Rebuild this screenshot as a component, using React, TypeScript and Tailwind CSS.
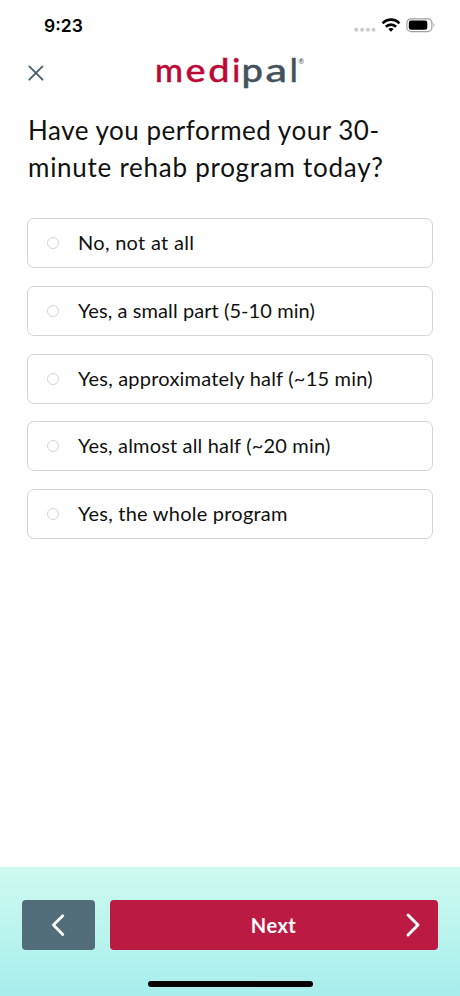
const options = [
  { label: "No, not at all", tracking: "tracking-[0.3px]" },
  { label: "Yes, a small part (5-10 min)", tracking: "tracking-[0.08px]" },
  { label: "Yes, approximately half (~15 min)", tracking: "tracking-[0.21px]" },
  { label: "Yes, almost all half (~20 min)", tracking: "tracking-[0.17px]" },
  { label: "Yes, the whole program", tracking: "tracking-[0.23px]" },
];

const wordmark = [
  { char: "m", x: 4, length: 28, fill: "#bd0837" },
  { char: "e", x: 34.6, length: 20, fill: "#bd0837" },
  { char: "d", x: 57.2, length: 21.3, fill: "#bd0837" },
  { char: "i", x: 81.2, length: 8, fill: "#bd0837" },
  { char: "p", x: 90.5, length: 21.5, fill: "#43525c" },
  { char: "a", x: 114.6, length: 21.5, fill: "#43525c" },
  { char: "l", x: 138.8, length: 8, fill: "#43525c" },
];

function StatusBar() {
  return (
    <div className="flex h-[50px] shrink-0 items-center justify-between pl-[44px] pr-[24px]">
      <span className="pt-[2px] font-['Inter',sans-serif] text-[17.5px] font-semibold leading-none text-black">9:23</span>
      <svg width="82" height="18" viewBox="0 0 82 18" className="block">
        <g fill="#cbcbcb">
          <circle cx="2.3" cy="13.7" r="2" />
          <circle cx="8.1" cy="13.7" r="2" />
          <circle cx="13.9" cy="13.7" r="2" />
          <circle cx="19.5" cy="13.7" r="2" />
        </g>
        <g fill="none" stroke="#000" strokeWidth="2.7">
          <path d="M28.6 7.3C33.3 2.3 40.7 2.3 45.4 7.3" />
          <path d="M31.9 10.7C34.8 7.8 39.2 7.8 42.1 10.7" />
        </g>
        <path d="M34.3 12.9Q37 10.9 39.7 12.9L37 15.7Z" />
        <rect x="52.9" y="2.8" width="25" height="12.8" rx="4" fill="none" stroke="#a0a0a0" strokeWidth="1.2" />
        <rect x="54.8" y="4.6" width="18.5" height="9.2" rx="2.3" />
        <path d="M79.6 7Q81.6 9 79.6 11.2Z" fill="#a0a0a0" />
      </svg>
    </div>
  );
}

function Logo() {
  return (
    <svg width="156" height="42" viewBox="0 0 156 42" className="block font-['Lato',sans-serif] font-medium">
      {wordmark.map((l) => (
        <text key={l.char} x={l.x} y="32.2" fontSize="33" textLength={l.length} lengthAdjust="spacingAndGlyphs" fill={l.fill} stroke={l.fill} strokeWidth="0.4">
          {l.char}
        </text>
      ))}
      <text x="147.3" y="13.5" fontSize="7" fill="#43525c">®</text>
    </svg>
  );
}

export default function App() {
  return (
    <div className="flex h-[996px] w-[460px] flex-col overflow-hidden bg-white font-['Lato',sans-serif] text-[#111]">
      <StatusBar />
      <header className="flex h-[60px] shrink-0 items-start pl-[28px]">
        <button aria-label="Close" className="mt-[15px] flex h-[16px] w-[16px] items-center justify-center">
          <svg width="16" height="16" viewBox="0 0 16 16" fill="none" stroke="#455d6a" strokeWidth="1.8" strokeLinecap="round">
            <path d="M1.3 1.4L14.5 14.7M14.5 1.4L1.3 14.7" />
          </svg>
        </button>
        <div className="ml-[107px]">
          <Logo />
        </div>
      </header>
      <main className="flex flex-1 flex-col px-[27px]">
        <h1 className="mt-[2px] whitespace-nowrap pl-px text-[26px] font-normal leading-[37px]">
          <span className="block tracking-[0.51px]">Have you performed your 30-</span>
          <span className="block tracking-[0.74px]">minute rehab program today?</span>
        </h1>
        <div className="mt-[32px] flex flex-col gap-[17.8px]">
          {options.map((o) => (
            <label key={o.label} className="flex h-[50px] items-center rounded-[7px] border border-[#d4d4d4] pl-[19px]">
              <span className="h-[12px] w-[12px] rounded-full border border-[#d4d4d4]" />
              <span className={`ml-[19px] whitespace-nowrap pb-[2px] text-[20px] leading-[28px] ${o.tracking}`}>{o.label}</span>
            </label>
          ))}
        </div>
      </main>
      <footer className="flex h-[129px] shrink-0 flex-col items-center bg-linear-to-b from-[#cefaf0] to-[#a7eeec] pt-[33.4px]">
        <div className="flex w-full gap-[15px] px-[22.4px]">
          <button aria-label="Back" className="flex h-[50px] w-[72.4px] items-center justify-center rounded-[4px] bg-[#526d7a] pr-px">
            <svg width="14" height="24" viewBox="0 0 14 24" fill="none" stroke="#fff" strokeWidth="2.8" strokeLinecap="round" strokeLinejoin="round">
              <path d="M11.8 2.7L2.4 12L11.8 21.5" />
            </svg>
          </button>
          <button className="flex h-[50px] flex-1 items-center rounded-[4px] bg-[#bb1b43] pr-[17px] text-white">
            <span className="ml-[141px] flex-1 pb-px text-left text-[20px] font-bold leading-[28px] tracking-[0.5px]">Next</span>
            <svg width="16" height="26" viewBox="0 0 16 26" fill="none" stroke="#fff" strokeWidth="2.9" strokeLinecap="round" strokeLinejoin="round">
              <path d="M3 3L13 13L3 23" />
            </svg>
          </button>
        </div>
        <div className="mt-[30.6px] h-[6px] w-[165px] rounded-full bg-black" />
      </footer>
    </div>
  );
}
